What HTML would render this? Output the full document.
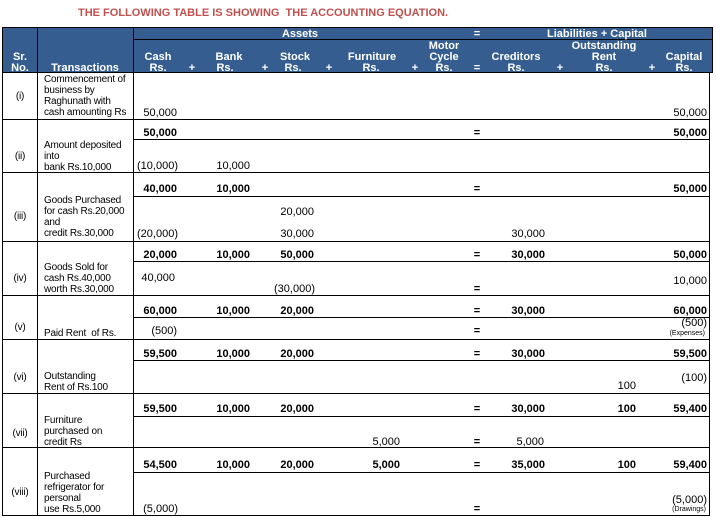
<!DOCTYPE html>
<html><head><meta charset="utf-8"><style>
body{margin:0;width:716px;height:517px;background:#fff;position:relative;overflow:hidden;font-family:"Liberation Sans",Arial,sans-serif;}
div{position:absolute;}
.t{font-size:11px;line-height:12px;white-space:nowrap;color:#000;}
.b{font-weight:bold;}
.h{color:#fff;font-weight:bold;font-size:11px;line-height:12px;white-space:nowrap;transform:translateX(-50%);}
.r{transform:translateX(-100%);text-align:right;}
.c{transform:translateX(-50%);}
.tx{font-size:10px;line-height:11px;white-space:nowrap;letter-spacing:-0.2px;}
.hl{height:1px;background:#000;}
.vl{width:1px;background:#000;}
.sm{font-size:7px;line-height:8px;}
</style></head><body>
<div style="left:78px;top:7px;color:#C0504D;font-weight:bold;font-size:11px;line-height:12px;white-space:nowrap;">THE FOLLOWING TABLE IS SHOWING&nbsp; THE ACCOUNTING EQUATION.</div>
<!-- header -->
<div style="left:2px;top:27px;width:711px;height:46px;background:#355D8F;border:1px solid #000;box-sizing:border-box;"></div>
<div style="left:133px;top:39px;width:580px;height:1px;background:#000;"></div>
<div style="left:37px;top:27px;width:1px;height:46px;background:#000;"></div>
<div style="left:133px;top:27px;width:1px;height:46px;background:#000;"></div>
<div class="h" style="left:300px;top:28px;">Assets</div>
<div class="h" style="left:477px;top:28px;">=</div>
<div class="h" style="left:597px;top:28px;">Liabilities + Capital</div>
<div class="h" style="left:20px;top:51px;">Sr.</div>
<div class="h" style="left:20px;top:62px;">No.</div>
<div class="h" style="left:85px;top:62px;">Transactions</div>
<div class="h" style="left:158px;top:51px;">Cash</div><div class="h" style="left:158px;top:62px;">Rs.</div>
<div class="h" style="left:192px;top:62px;">+</div>
<div class="h" style="left:229px;top:51px;">Bank</div><div class="h" style="left:225px;top:62px;">Rs.</div>
<div class="h" style="left:265px;top:62px;">+</div>
<div class="h" style="left:295px;top:51px;">Stock</div><div class="h" style="left:293px;top:62px;">Rs.</div>
<div class="h" style="left:329px;top:62px;">+</div>
<div class="h" style="left:372px;top:51px;">Furniture</div><div class="h" style="left:371px;top:62px;">Rs.</div>
<div class="h" style="left:415px;top:62px;">+</div>
<div class="h" style="left:444px;top:40px;">Motor</div><div class="h" style="left:444px;top:51px;">Cycle</div><div class="h" style="left:444px;top:62px;">Rs.</div>
<div class="h" style="left:477px;top:62px;">=</div>
<div class="h" style="left:516px;top:51px;">Creditors</div><div class="h" style="left:516px;top:62px;">Rs.</div>
<div class="h" style="left:560px;top:62px;">+</div>
<div class="h" style="left:604px;top:40px;">Outstanding</div><div class="h" style="left:604px;top:51px;">Rent</div><div class="h" style="left:604px;top:62px;">Rs.</div>
<div class="h" style="left:652px;top:62px;">+</div>
<div class="h" style="left:684px;top:51px;">Capital</div><div class="h" style="left:684px;top:62px;">Rs.</div>
<!-- body grid -->
<div class="vl" style="left:2px;top:73px;height:443px;"></div>
<div class="vl" style="left:37px;top:73px;height:443px;"></div>
<div class="vl" style="left:133px;top:73px;height:443px;"></div>
<div class="vl" style="left:709px;top:73px;height:443px;"></div>
<div class="hl" style="left:2px;width:708px;top:119px;"></div>
<div class="hl" style="left:2px;width:708px;top:172px;"></div>
<div class="hl" style="left:2px;width:708px;top:241px;"></div>
<div class="hl" style="left:2px;width:708px;top:295px;"></div>
<div class="hl" style="left:2px;width:708px;top:339px;"></div>
<div class="hl" style="left:2px;width:708px;top:393px;"></div>
<div class="hl" style="left:2px;width:708px;top:447px;"></div>
<div class="hl" style="left:2px;width:708px;top:515px;"></div>
<div class="hl" style="left:133px;width:577px;top:139px;"></div>
<div class="hl" style="left:133px;width:577px;top:196px;"></div>
<div class="hl" style="left:133px;width:577px;top:261px;"></div>
<div class="hl" style="left:133px;width:577px;top:317px;"></div>
<div class="hl" style="left:133px;width:577px;top:360px;"></div>
<div class="hl" style="left:133px;width:577px;top:416px;"></div>
<div class="hl" style="left:133px;width:577px;top:472px;"></div>
<!-- sr numbers -->
<div class="tx c" style="left:20px;top:91px;">(i)</div>
<div class="tx c" style="left:20px;top:151px;">(ii)</div>
<div class="tx c" style="left:20px;top:211px;">(iii)</div>
<div class="tx c" style="left:20px;top:273px;">(iv)</div>
<div class="tx c" style="left:20px;top:322px;">(v)</div>
<div class="tx c" style="left:20px;top:372px;">(vi)</div>
<div class="tx c" style="left:20px;top:428px;">(vii)</div>
<div class="tx c" style="left:20px;top:487px;">(viii)</div>
<!-- transactions text -->
<div class="tx" style="left:44px;top:74px;">Commencement of<br>business by<br>Raghunath with<br>cash amounting Rs</div>
<div class="tx" style="left:44px;top:140px;">Amount deposited<br>into<br>bank Rs.10,000</div>
<div class="tx" style="left:44px;top:195px;">Goods Purchased<br>for cash Rs.20,000<br>and<br>credit Rs.30,000</div>
<div class="tx" style="left:44px;top:262px;">Goods Sold for<br>cash Rs.40,000<br>worth Rs.30,000</div>
<div class="tx" style="left:44px;top:328px;">Paid Rent&nbsp; of Rs.</div>
<div class="tx" style="left:44px;top:371px;">Outstanding<br>Rent of Rs.100</div>
<div class="tx" style="left:44px;top:415px;">Furniture<br>purchased on<br>credit Rs</div>
<div class="tx" style="left:44px;top:471px;">Purchased<br>refrigerator for<br>personal<br>use Rs.5,000</div>
<!-- row i -->
<div class="t r" style="left:177px;top:107px;">50,000</div>
<div class="t r" style="left:707px;top:107px;">50,000</div>
<!-- row ii -->
<div class="t b r" style="left:177px;top:127px;">50,000</div>
<div class="t b c" style="left:477px;top:127px;">=</div>
<div class="t b r" style="left:707px;top:127px;">50,000</div>
<div class="t r" style="left:178px;top:160px;">(10,000)</div>
<div class="t r" style="left:250px;top:160px;">10,000</div>
<!-- row iii -->
<div class="t b r" style="left:177px;top:183px;">40,000</div>
<div class="t b r" style="left:250px;top:183px;">10,000</div>
<div class="t b c" style="left:477px;top:183px;">=</div>
<div class="t b r" style="left:707px;top:183px;">50,000</div>
<div class="t r" style="left:314px;top:206px;">20,000</div>
<div class="t r" style="left:178px;top:228px;">(20,000)</div>
<div class="t r" style="left:314px;top:228px;">30,000</div>
<div class="t r" style="left:545px;top:228px;">30,000</div>
<!-- row iv -->
<div class="t b r" style="left:177px;top:249px;">20,000</div>
<div class="t b r" style="left:250px;top:249px;">10,000</div>
<div class="t b r" style="left:314px;top:249px;">50,000</div>
<div class="t b c" style="left:477px;top:249px;">=</div>
<div class="t b r" style="left:545px;top:249px;">30,000</div>
<div class="t b r" style="left:707px;top:249px;">50,000</div>
<div class="t r" style="left:175px;top:272px;">40,000</div>
<div class="t r" style="left:707px;top:275px;">10,000</div>
<div class="t r" style="left:315px;top:283px;">(30,000)</div>
<div class="t b c" style="left:477px;top:283px;">=</div>
<!-- row v -->
<div class="t b r" style="left:177px;top:305px;">60,000</div>
<div class="t b r" style="left:250px;top:305px;">10,000</div>
<div class="t b r" style="left:314px;top:305px;">20,000</div>
<div class="t b c" style="left:477px;top:305px;">=</div>
<div class="t b r" style="left:545px;top:305px;">30,000</div>
<div class="t b r" style="left:707px;top:305px;">60,000</div>
<div class="t r" style="left:707px;top:317px;">(500)</div>
<div class="t sm r" style="left:705px;top:330px;">(Expenses)</div>
<div class="t r" style="left:177px;top:325px;">(500)</div>
<div class="t b c" style="left:477px;top:325px;">=</div>
<!-- row vi -->
<div class="t b r" style="left:177px;top:348px;">59,500</div>
<div class="t b r" style="left:250px;top:348px;">10,000</div>
<div class="t b r" style="left:314px;top:348px;">20,000</div>
<div class="t b c" style="left:477px;top:348px;">=</div>
<div class="t b r" style="left:545px;top:348px;">30,000</div>
<div class="t b r" style="left:707px;top:348px;">59,500</div>
<div class="t r" style="left:707px;top:372px;">(100)</div>
<div class="t r" style="left:636px;top:380px;">100</div>
<!-- row vii -->
<div class="t b r" style="left:177px;top:403px;">59,500</div>
<div class="t b r" style="left:250px;top:403px;">10,000</div>
<div class="t b r" style="left:314px;top:403px;">20,000</div>
<div class="t b c" style="left:477px;top:403px;">=</div>
<div class="t b r" style="left:545px;top:403px;">30,000</div>
<div class="t b r" style="left:636px;top:403px;">100</div>
<div class="t b r" style="left:707px;top:403px;">59,400</div>
<div class="t r" style="left:400px;top:436px;">5,000</div>
<div class="t b c" style="left:477px;top:436px;">=</div>
<div class="t r" style="left:544px;top:436px;">5,000</div>
<!-- row viii -->
<div class="t b r" style="left:177px;top:459px;">54,500</div>
<div class="t b r" style="left:250px;top:459px;">10,000</div>
<div class="t b r" style="left:314px;top:459px;">20,000</div>
<div class="t b r" style="left:400px;top:459px;">5,000</div>
<div class="t b c" style="left:477px;top:459px;">=</div>
<div class="t b r" style="left:545px;top:459px;">35,000</div>
<div class="t b r" style="left:636px;top:459px;">100</div>
<div class="t b r" style="left:707px;top:459px;">59,400</div>
<div class="t r" style="left:707px;top:494px;">(5,000)</div>
<div class="t sm r" style="left:706px;top:506px;">(Drawings)</div>
<div class="t r" style="left:178px;top:503px;">(5,000)</div>
<div class="t b c" style="left:477px;top:503px;">=</div>
</body></html>
